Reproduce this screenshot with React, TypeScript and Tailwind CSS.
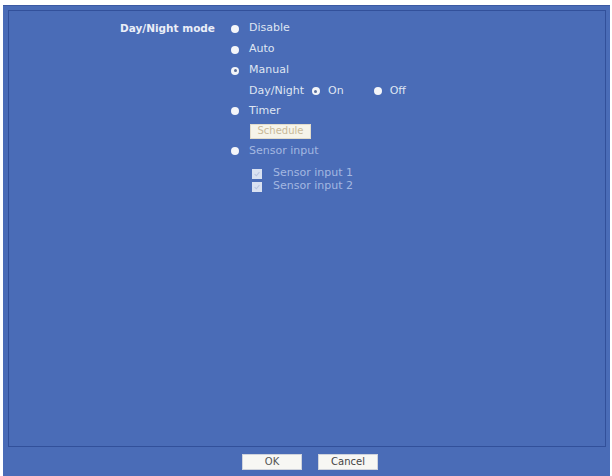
import React from 'react';

const font = { fontFamily: '"DejaVu Sans", Verdana, sans-serif' };

function Radio({ checked }: { checked?: boolean }) {
  return checked ? (
    <span className="flex h-[8px] w-[8px] items-center justify-center rounded-full bg-[#f2f4f8]">
      <span className="h-[3px] w-[3px] rounded-full bg-[#5c6f99]" />
    </span>
  ) : (
    <span className="h-[8px] w-[8px] rounded-full bg-[#f4f5f9]" />
  );
}

function Checkbox() {
  return (
    <span className="flex h-[10px] w-[10px] items-center justify-center bg-[#d9e1f1]">
      <svg viewBox="0 0 10 10" className="h-[8px] w-[8px]">
        <path d="M2 5.2 L4.2 7.2 L8 2.8" fill="none" stroke="#b7c4e0" strokeWidth="1.4" />
      </svg>
    </span>
  );
}

function OptionRow({
  label,
  checked,
  faded,
  className,
}: {
  label: string;
  checked?: boolean;
  faded?: boolean;
  className?: string;
}) {
  return (
    <div className={`flex items-center ${className ?? 'h-[21px]'}`}>
      <span className="flex w-[8px] justify-center">
        <Radio checked={checked} />
      </span>
      <span className={`ml-[10px] ${faded ? 'text-[#a3b7e1]' : 'text-[#dfe5f2]'}`}>{label}</span>
    </div>
  );
}

export default function App() {
  return (
    <div className="h-[476px] w-[612px] bg-white pl-[3px] pr-[2px] pt-[5px]" style={font}>
      <div className="flex h-full flex-col border-t border-[#3b5aa3] bg-[#4a6cb7] pl-[5px] pr-[4px] pt-[4px]">
        <div className="flex h-[437px] border border-[#32509a] pt-[7px] text-[11px]">
          <div className="w-[206px] text-right">
            <div className="flex h-[21px] items-center justify-end text-[10.5px] font-bold text-[#eaeef7]">
              Day/Night mode
            </div>
          </div>
          <div className="ml-[16px] flex flex-col">
            <OptionRow label="Disable" />
            <OptionRow label="Auto" />
            <OptionRow label="Manual" checked />
            <div className="flex h-[20px] items-center pl-[18px] text-[#dfe5f2]">
              <span>Day/Night</span>
              <span className="ml-[8px] flex w-[8px] justify-center">
                <Radio checked />
              </span>
              <span className="ml-[8px]">On</span>
              <span className="ml-[30px] flex w-[8px] justify-center">
                <Radio />
              </span>
              <span className="ml-[8px]">Off</span>
            </div>
            <OptionRow label="Timer" className="h-[20px]" />
            <div className="flex h-[20px] items-center pl-[19px]">
              <button className="h-[15px] w-[61px] border border-[#e2dccb] bg-[#f6f4ea] text-[10px] leading-none text-[#c9b998]">
                Schedule
              </button>
            </div>
            <OptionRow label="Sensor input" faded className="h-[20px]" />
            <div className="mt-[6px] flex h-[13px] items-center pl-[21px] text-[#a3b7e1]">
              <Checkbox />
              <span className="ml-[11px]">Sensor input 1</span>
            </div>
            <div className="flex h-[13px] items-center pl-[21px] text-[#a3b7e1]">
              <Checkbox />
              <span className="ml-[11px]">Sensor input 2</span>
            </div>
          </div>
        </div>
        <div className="flex justify-center gap-[16px] pl-[6px] pt-[7px]">
          <button className="h-[16px] w-[60px] border border-[#cfd3dc] bg-[#f7f7f4] text-[10px] leading-none text-[#555]">
            OK
          </button>
          <button className="h-[16px] w-[60px] border border-[#cfd3dc] bg-[#f7f7f4] text-[10px] leading-none text-[#444]">
            Cancel
          </button>
        </div>
      </div>
    </div>
  );
}
